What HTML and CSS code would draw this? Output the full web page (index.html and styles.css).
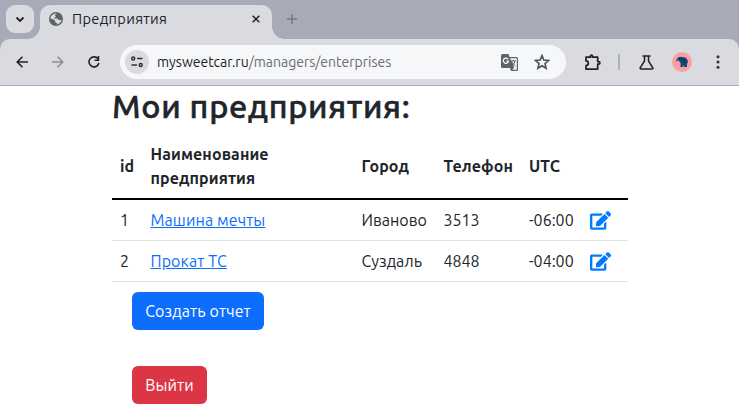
FILE: index.html
```html
<!DOCTYPE html>
<html lang="ru">
<head>
<meta charset="utf-8">
<title>Предприятия</title>
<link rel="stylesheet" href="styles.css">
</head>
<body>
<header class="tabs">
  <div class="tab-search"><svg width="10" height="7" viewBox="0 0 10 7"><path d="M1.5 1.5 5 5l3.500-3.500" fill="none" stroke="#202124" stroke-width="1.800"/></svg></div>
  <div class="tab">
    <svg class="globe" width="14" height="14" viewBox="0 0 14 14"><circle cx="7" cy="7" r="7" fill="#5f6368"/><path d="M8 1.500C6 2 5.500 3 6.500 4S5 5.500 5 6.500H8c1 0 1 1.500 2 1.500h2.500C12 10.500 10 12.300 8 12.500V11C6 11 6.500 9 5.500 8L1.500 6.500C1.500 3.500 4.500 1 8 1.500Z" fill="#dadbe0"/></svg>
    <span class="tab-title">Предприятия</span>
    <svg class="close" width="8" height="8" viewBox="0 0 8 8"><path d="m.7.7 6.600 6.600m0-6.600L.7 7.300" stroke="#202124" stroke-width="1.500"/></svg>
  </div>
  <svg class="plus" width="10" height="10" viewBox="0 0 10 10"><path d="M5 0v10M0 5h10" stroke="#777984" stroke-width="1.500"/></svg>
</header>
<nav class="toolbar">
  <svg class="nav-icon" width="12" height="12" viewBox="0 0 12 12"><path d="M6.500.7 1.200 6l5.300 5.300M1.200 6H12" fill="none" stroke="#202124" stroke-width="1.600"/></svg>
  <svg class="nav-icon forward" width="12" height="12" viewBox="0 0 12 12"><path d="M5.500.7 10.800 6l-5.300 5.300M10.800 6H0" fill="none" stroke="#8b8d92" stroke-width="1.500"/></svg>
  <svg class="nav-icon reload" width="12" height="12" viewBox="0 0 12 12"><path d="M10.300 3.300A5 5 0 1 0 10.900 7" fill="none" stroke="#202124" stroke-width="1.600"/><path d="M11.200 0v4.900H6.600V3.400h3.100V0Z" fill="#202124"/></svg>
  <div class="address">
    <span class="site"><svg width="14" height="12" viewBox="0 0 14 12"><g fill="none" stroke="#303238" stroke-width="1.500"><circle cx="3.200" cy="2.600" r="1.500"/><path d="M7 2.600h5.500M1.500 9H7"/><circle cx="10.700" cy="9" r="1.500"/></g></svg></span>
    <span class="url">mysweetcar.ru<span class="path">/managers/enterprises</span></span>
    <svg class="translate" width="17" height="17" viewBox="0 0 17 17"><path d="M1.500 0h6l1 3h7A1.500 1.500 0 0 1 17 4.500v11a1.500 1.500 0 0 1-1.500 1.500H10l-1-3H1.500A1.500 1.500 0 0 1 0 12.500v-11A1.500 1.500 0 0 1 1.500 0Z" fill="#5f6368"/><path d="M9 4.200h6.200q.6 0 .6.600v10.300q0 .6-.6.600h-4l2-2-1.300-3.800Z" fill="#f6f7f9"/><path d="M7 5.200A2.600 2.600 0 1 0 7.500 7H5.300" fill="none" stroke="#fff" stroke-width="1.200"/><path d="M10 7h5M12.400 5.700V7m1.700 0c-.4 1.800-1.200 3-2.500 4.200M11 8c.8 1.500 2 3 3.500 4" fill="none" stroke="#5f6368"/></svg>
    <svg class="star" width="16" height="16" viewBox="0 0 16 16"><path d="m8 1.600 1.800 4.500 4.800.4L11 9.600l1.100 4.700L8 11.800l-4.100 2.500L5 9.600 1.400 6.500l4.800-.4Z" fill="none" stroke="#4d5156" stroke-width="1.600"/></svg>
  </div>
  <svg class="puzzle" width="18" height="17" viewBox="0 0 18 17"><path d="M2 3.200h4.500V2a1 1 0 0 1 2 0v1.200h5.200v4.500h1a1.200 1.200 0 0 1 0 2.400h-1v5H2v-3.600a2.300 2.300 0 0 0 0-4.600Z" fill="none" stroke="#202124" stroke-width="1.700" stroke-linejoin="round"/></svg>
  <i class="divider"></i>
  <svg class="flask" width="15" height="15" viewBox="0 0 15 15"><path d="M3.500 1h8M5.500 1v5L1.200 12.800q-.5 1.200.8 1.200h11q1.300 0 .8-1.200L9.500 6V1" fill="none" stroke="#202124" stroke-width="1.500"/></svg>
  <svg class="avatar" width="20" height="20" viewBox="0 0 20 20"><circle cx="10" cy="10" r="10" fill="#faa0a4"/><path d="M4 8.500 6 5.500q2-1 4-.5 4-.5 5.500 3l.5 3-1 .5V15h-3v-1h-1v1H8.500v-5L7 9.500 6 8 4.500 9.500Z" fill="#174b78"/><path d="m7 6 3 1v2.500L8.500 11M12 7l1 2-1 2" fill="none" stroke="#0b2238" stroke-width=".8"/></svg>
  <svg class="menu" width="4" height="14" viewBox="0 0 4 14" fill="#303238"><circle cx="2" cy="1.800" r="1.500"/><circle cx="2" cy="7" r="1.500"/><circle cx="2" cy="12.200" r="1.500"/></svg>
</nav>
<main>
  <h2>Мои предприятия:</h2>
  <table>
    <colgroup><col class="c-id"><col class="c-name"><col class="c-city"><col class="c-phone"><col class="c-utc"><col></colgroup>
    <thead><tr><th>id</th><th class="name">Наименование<br>предприятия</th><th>Город</th><th>Телефон</th><th>UTC</th><th></th></tr></thead>
    <tbody>
      <tr><td>1</td><td><a href="#">Машина мечты</a></td><td>Иваново</td><td>3513</td><td>-06:00</td><td><svg class="edit" width="21" height="19" viewBox="0 0 576 512"><path fill="#007bff" d="M402.600 83.200l90.200 90.200c3.800 3.800 3.800 10 0 13.800L274.400 405.600l-92.800 10.300c-12.400 1.400-22.900-9.100-21.500-21.500l10.300-92.800L388.800 83.200c3.800-3.800 10-3.800 13.800 0zm162-22.900l-48.800-48.800c-15.200-15.200-39.900-15.200-55.200 0l-35.400 35.400c-3.800 3.800-3.800 10 0 13.800l90.200 90.200c3.800 3.800 10 3.800 13.800 0l35.400-35.400c15.200-15.300 15.200-40 0-55.200zM384 346.200V448H64V128h229.800c3.200 0 6.200-1.300 8.500-3.500l40-40c7.600-7.600 2.200-20.500-8.500-20.500H48C21.500 64 0 85.500 0 112v352c0 26.500 21.500 48 48 48h352c26.500 0 48-21.500 48-48V306.200c0-10.700-12.900-16-20.500-8.500l-40 40c-2.200 2.300-3.500 5.300-3.500 8.500z"/></svg></td></tr>
      <tr><td>2</td><td><a href="#">Прокат ТС</a></td><td>Суздаль</td><td>4848</td><td>-04:00</td><td><svg class="edit" width="21" height="19" viewBox="0 0 576 512"><path fill="#007bff" d="M402.600 83.200l90.200 90.200c3.800 3.800 3.800 10 0 13.800L274.400 405.600l-92.800 10.300c-12.400 1.400-22.900-9.100-21.500-21.500l10.300-92.800L388.800 83.200c3.800-3.800 10-3.800 13.800 0zm162-22.900l-48.800-48.800c-15.200-15.200-39.900-15.200-55.200 0l-35.400 35.400c-3.800 3.800-3.800 10 0 13.800l90.200 90.200c3.800 3.800 10 3.800 13.800 0l35.400-35.400c15.200-15.300 15.200-40 0-55.200zM384 346.200V448H64V128h229.800c3.200 0 6.200-1.300 8.500-3.500l40-40c7.600-7.600 2.200-20.500-8.500-20.500H48C21.500 64 0 85.500 0 112v352c0 26.500 21.500 48 48 48h352c26.500 0 48-21.500 48-48V306.200c0-10.700-12.900-16-20.500-8.500l-40 40c-2.200 2.300-3.500 5.300-3.500 8.500z"/></svg></td></tr>
    </tbody>
  </table>
  <div class="actions"><button class="create">Создать отчет</button><button class="logout">Выйти</button></div>
</main>
</body>
</html>
```
FILE: styles.css
```css
* { box-sizing: border-box; }
body { margin: 0; height: 413px; overflow: hidden; background: linear-gradient(#a7abb7 50px, #fff 50px); color: #212529; font: 16px/24px Ubuntu, "Noto Sans", sans-serif; }
svg { display: block; flex: none; }
.tabs { display: flex; height: 39px; background: #a7abb7; }
.tab-search { width: 28px; height: 28px; margin: 5px 6px 0; border-radius: 9px; background: #dadbe0; display: flex; align-items: center; justify-content: center; flex: none; }
.tab { position: relative; width: 232px; height: 34px; margin-top: 5px; border-radius: 10px 10px 0 0; background: #dadbe0; display: flex; align-items: center; padding: 0 12px 6px 9px; flex: none; }
.tab::before, .tab::after { content: ""; position: absolute; bottom: 0; width: 12px; height: 12px; }
.tab::before { left: -12px; background: radial-gradient(circle at 0 0, transparent 11.500px, #dadbe0 12px); }
.tab::after { right: -12px; background: radial-gradient(circle at 100% 0, transparent 11.500px, #dadbe0 12px); }
.tab-title { margin-left: 9px; font-size: 14.670px; letter-spacing: .3px; white-space: nowrap; }
.close { margin-left: auto; }
.plus { margin: 14px 0 0 15px; }
.toolbar { display: flex; align-items: center; height: 47px; padding: 0 19px 1px 16px; background: #dadbe0; border-radius: 10px 10px 0 0; box-shadow: inset 0 -1px #aaaab0; }
.forward, .reload { margin-left: 24px; }
.address { display: flex; align-items: center; height: 34px; width: 446px; margin-left: 20px; border-radius: 17px; background: #f6f7f9; padding: 0 16px 0 5px; }
.site { width: 24px; height: 24px; border-radius: 50%; background: #dadbe0; display: flex; align-items: center; justify-content: center; flex: none; }
.url { margin-left: 8px; font-size: 14px; color: #202124; white-space: nowrap; letter-spacing: -.01px; }
.path { color: #6a6d72; }
.translate { margin-left: auto; }
.star { margin-left: 16px; }
.puzzle { margin-left: 18px; }
.divider { width: 2px; height: 16px; background: #afb1bb; margin-left: 16px; }
.flask { margin-left: 19px; }
.avatar { margin-left: 18px; }
.menu { margin-left: auto; }
main { width: 516px; margin-left: 112px; }
h2 { height: 48px; margin: 0; font-size: 32.500px; line-height: 40px; font-weight: 500; white-space: nowrap; letter-spacing: .68px; -webkit-text-stroke: .5px #212529; }
table { width: 516px; table-layout: fixed; border-collapse: separate; border-spacing: 0; }
.c-id { width: 30.500px; }
.c-name { width: 211px; }
.c-city { width: 82px; }
.c-phone { width: 85.500px; }
.c-utc { width: 60px; }
th, td { padding: 8px; border-bottom: 1px solid #dee2e6; text-align: left; vertical-align: middle; white-space: nowrap; }
th { border-bottom: 2px solid #000; font-weight: 700; letter-spacing: .1px; }
a { color: #0d6efd; text-decoration: underline; text-underline-offset: 1px; letter-spacing: .1px; }
.edit { margin-left: .5px; }
.actions { display: flex; flex-direction: column; align-items: flex-start; gap: 36px; padding: 10px 20px; }
button { height: 38px; border: 0; border-radius: 6px; color: #fff; font: inherit; padding: 0; white-space: nowrap; letter-spacing: .12px; }
.create { width: 132px; background: #0d6efd; }
.logout { width: 75px; background: #dc3545; }
```
